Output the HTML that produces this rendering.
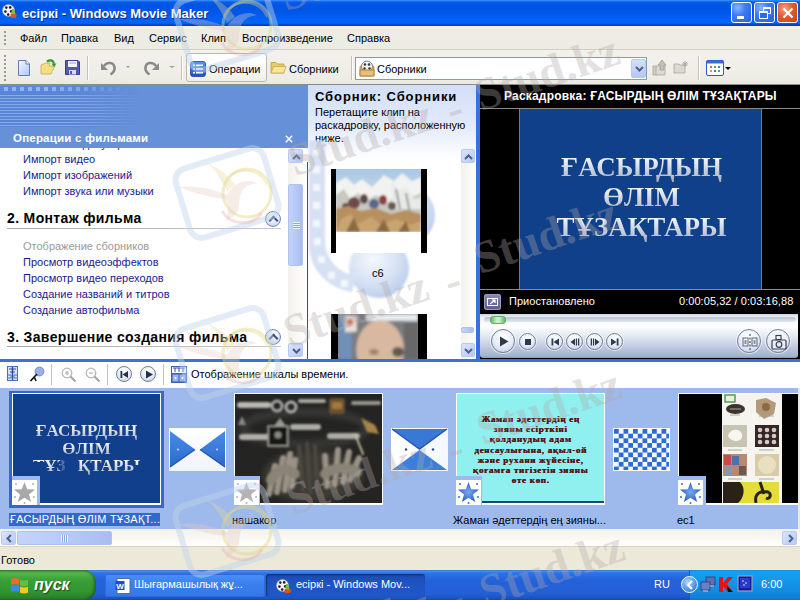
<!DOCTYPE html>
<html><head><meta charset="utf-8">
<style>
*{margin:0;padding:0;box-sizing:border-box}
html,body{width:800px;height:600px;overflow:hidden;background:#fff}
body{position:relative;font-family:"Liberation Sans",sans-serif;font-size:11px;color:#000}
.a{position:absolute}
.t{position:absolute;white-space:nowrap;line-height:1}
.grip{width:2px;background:repeating-linear-gradient(#9A9A90 0,#9A9A90 2px,transparent 2px,transparent 4px)}
.sep{width:2px;background:#C5C2B5;border-right:1px solid #FFF}
.lk{color:#1A1A90}
.hd{font-size:14px;font-weight:bold;letter-spacing:0.35px}
.cb{width:16px;height:16px;border-radius:50%;border:1px solid #7A8AA8;background:radial-gradient(circle at 50% 35%,#FFFFFF 0,#DCE4F4 60%,#B0C0E0 100%)}
.cb::after{content:"";position:absolute;left:4px;top:5px;width:5px;height:5px;border-left:2px solid #3A5080;border-top:2px solid #3A5080;transform:rotate(45deg)}
.sbtn{width:15px;height:14px;border:1px solid #B8CAF0;border-radius:2px;background:linear-gradient(135deg,#DCE6FC,#B6C9F5)}
.sthumb{position:absolute;border:1px solid #AFC2EC;border-radius:2px;background:linear-gradient(90deg,#C4D4FA,#B4C8F6 60%,#A8BCF0)}
.vt{font-family:"Liberation Serif",serif;font-weight:bold;font-size:27px;line-height:30px;letter-spacing:0px;background:linear-gradient(#EEF2F8 25%,#A4AEC2 100%);-webkit-background-clip:text;background-clip:text;color:transparent}
.pb{position:absolute;border-radius:50%;border:1.5px solid #76808F;background:radial-gradient(circle at 50% 30%,#FFFFFF 0,#E8EEF8 50%,#C0CCE4 100%);box-shadow:0 0 0 1px rgba(255,255,255,.6)}
.vt2{font-family:"Liberation Serif",serif;font-weight:bold;font-size:17px;line-height:17.5px;background:linear-gradient(#EEF2F8 25%,#A8B2C4 100%);-webkit-background-clip:text;background-clip:text;color:transparent}
.star{position:absolute}
.wmt{position:absolute;white-space:nowrap;font-family:"Liberation Serif",serif;font-weight:bold;font-size:46px;line-height:48px;color:rgba(178,168,168,0.36);transform-origin:0 100%;transform:rotate(-19deg)}
.wb{width:21px;height:21px;border:1px solid #fff;border-radius:3px;background:radial-gradient(circle at 30% 25%,#8CB4FF 0,#3C7CF2 40%,#2560E0 100%)}
</style></head><body>

<!-- TITLE BAR -->
<div class="a" id="title" style="left:0;top:0;width:800px;height:26px;background:linear-gradient(#3D95FF 0px,#0A5CE8 2px,#0054E3 6px,#0056E8 12px,#005FF5 18px,#0066F8 23px,#0042C8 25px,#0038B0 26px)">
 <svg class="a" style="left:2px;top:3px" width="16" height="16" viewBox="0 0 16 16">
  <circle cx="6.5" cy="7.5" r="6" fill="#F4F4F4" stroke="#9AA" stroke-width="0.6"/>
  <circle cx="4.3" cy="4.6" r="1.3" fill="#222"/><circle cx="8.2" cy="4.4" r="1.3" fill="#222"/>
  <circle cx="3.4" cy="8.6" r="1.3" fill="#222"/><circle cx="9.2" cy="8.4" r="1.3" fill="#222"/>
  <circle cx="6.2" cy="11.6" r="1.3" fill="#222"/>
  <path d="M10 6 L12 6 L14 13 L9 13 Z" fill="#7EC03A"/>
  <path d="M8.5 11 L15 11.5 L14 15 L9 15 Z" fill="#E2501E"/>
 </svg>
 <span class="t" style="left:22px;top:7px;font-size:13px;font-weight:bold;color:#fff;text-shadow:1px 1px 0 #0A2A8A">ecipкі - Windows Movie Maker</span>
 <div class="a wb" style="left:731px;top:2px"><div class="a" style="left:5px;top:13px;width:7px;height:3px;background:#fff"></div></div>
 <div class="a wb" style="left:754px;top:2px"><div class="a" style="left:8px;top:4px;width:8px;height:7px;border:1px solid #fff;border-top-width:2px"></div><div class="a" style="left:4px;top:8px;width:9px;height:8px;border:1px solid #fff;border-top-width:2px;background:#2D6BEA"></div></div>
 <div class="a wb" style="left:777px;top:2px;background:radial-gradient(circle at 35% 30%,#F2A58A 0,#E35A2C 45%,#C8401A 100%)"><svg class="a" style="left:4px;top:4px" width="12" height="12"><path d="M1.5 1.5L10.5 10.5M10.5 1.5L1.5 10.5" stroke="#fff" stroke-width="2.2"/></svg></div>
</div>

<!-- MENU BAR -->
<div class="a" id="menu" style="left:0;top:26px;width:800px;height:24px;background:linear-gradient(#F6F5EF 0,#EEEDE5 4px,#EDECE3 22px);border-bottom:1px solid #D2CFC2">
 <div class="a grip" style="left:4px;top:5px;height:14px"></div>
 <span class="t" style="left:20px;top:7px">Файл</span>
 <span class="t" style="left:61px;top:7px">Правка</span>
 <span class="t" style="left:114px;top:7px">Вид</span>
 <span class="t" style="left:149px;top:7px">Сервис</span>
 <span class="t" style="left:201px;top:7px">Клип</span>
 <span class="t" style="left:242px;top:7px">Воспроизведение</span>
 <span class="t" style="left:347px;top:7px">Справка</span>
</div>

<!-- TOOLBAR -->
<div class="a" id="tb" style="left:0;top:50px;width:800px;height:34px;background:linear-gradient(#F2F1EC 0,#EFEEE8 20px,#EBEAE2 34px)">
 <div class="a grip" style="left:4px;top:5px;height:26px"></div>
 <svg class="a" style="left:17px;top:10px" width="14" height="16" viewBox="0 0 14 16"><defs><linearGradient id="gd" x1="0" y1="0" x2="1" y2="1"><stop offset="0" stop-color="#F4F8FE"/><stop offset="1" stop-color="#A8C8F0"/></linearGradient></defs><path d="M1.5 0.5H9L12.5 4V15.5H1.5Z" fill="url(#gd)" stroke="#6C78A8"/><path d="M9 0.5V4H12.5" fill="#fff" stroke="#6C78A8"/></svg>
 <svg class="a" style="left:39px;top:8px" width="18" height="18" viewBox="0 0 18 18"><path d="M2 7L7 5H11L10 8H16L12 16H2Z" fill="#F3DE86" stroke="#C8A848" stroke-width="0.8"/><path d="M8 3.5C11 1.5 14 2 15 5.5" fill="none" stroke="#2E9A2E" stroke-width="2.2"/><path d="M12.5 5.5H17.5L15 9Z" fill="#2E9A2E"/></svg>
 <svg class="a" style="left:65px;top:10px" width="15" height="15" viewBox="0 0 15 15"><path d="M0.5 0.5H13L14.5 2V14.5H0.5Z" fill="#5558B0" stroke="#3A3C88"/><rect x="3" y="1" width="9" height="6" fill="#F4F4F8"/><rect x="4" y="2.5" width="7" height="1" fill="#9AA0C8"/><rect x="4" y="10" width="7" height="4.5" fill="#D8DAEE"/><rect x="5" y="11" width="2" height="3" fill="#5558B0"/></svg>
 <div class="a sep" style="left:87px;top:6px;height:24px"></div>
 <svg class="a" style="left:100px;top:10px" width="17" height="16" viewBox="0 0 17 16"><path d="M4 6C7 1.5 14 2 14.5 7.5C15 11 12 13.5 10.5 14.5" fill="none" stroke="#8A8A8A" stroke-width="2.6"/><path d="M1 3V10H8Z" fill="#8A8A8A"/></svg>
 <div class="a" style="left:126px;top:16px;width:0;height:0;border-left:2px solid transparent;border-right:2px solid transparent;border-top:2px solid #A0A09A"></div>
 <svg class="a" style="left:143px;top:10px" width="17" height="16" viewBox="0 0 17 16"><path d="M13 6C10 1.5 3 2 2.5 7.5C2 11 5 13.5 6.5 14.5" fill="none" stroke="#8A8A8A" stroke-width="2.6"/><path d="M16 3V10H9Z" fill="#8A8A8A"/></svg>
 <div class="a" style="left:169px;top:16px;width:0;height:0;border-left:3px solid transparent;border-right:3px solid transparent;border-top:2px solid #A0A09A"></div>
 <div class="a sep" style="left:181px;top:6px;height:24px"></div>
 <div class="a" style="left:186px;top:3px;width:81px;height:29px;border:1px solid #BAB8AC;border-radius:3px;background:linear-gradient(#FFFFFF 0,#F8F8F4 60%,#EFEEE8 100%)"></div>
 <svg class="a" style="left:190px;top:11px" width="16" height="16" viewBox="0 0 16 16"><defs><linearGradient id="gb" x1="0" y1="0" x2="0" y2="1"><stop offset="0" stop-color="#5C9AF8"/><stop offset="1" stop-color="#1E4ACC"/></linearGradient></defs><rect x="0.5" y="0.5" width="15" height="15" rx="2.5" fill="url(#gb)" stroke="#2040A8" stroke-width="0.8"/><rect x="3" y="3.5" width="2" height="1.6" fill="#fff"/><rect x="6" y="3.5" width="7" height="1.6" fill="#fff"/><rect x="3" y="7.2" width="2" height="1.6" fill="#fff"/><rect x="6" y="7.2" width="7" height="1.6" fill="#fff"/><rect x="3" y="10.9" width="2" height="1.6" fill="#fff"/><rect x="6" y="10.9" width="7" height="1.6" fill="#fff"/></svg>
 <span class="t" style="left:209px;top:14px">Операции</span>
 <svg class="a" style="left:270px;top:10px" width="17" height="15" viewBox="0 0 17 15"><path d="M1 2.5H6L7.5 4H14V13H1Z" fill="#E8CC68" stroke="#C0A040" stroke-width="0.8"/><path d="M3.5 6.5H16L13.5 13H1Z" fill="#F8E898" stroke="#C8A848" stroke-width="0.8"/></svg>
 <span class="t" style="left:289px;top:14px">Сборники</span>
 <div class="a sep" style="left:351px;top:6px;height:24px"></div>
 <div class="a" style="left:355px;top:7px;width:292px;height:23px;border:1px solid #7F9DB9;background:#fff">
  <svg class="a" style="left:3px;top:2px" width="17" height="17" viewBox="0 0 17 17"><rect x="1" y="6" width="14" height="10" rx="1" fill="#E8C070" stroke="#A07830" stroke-width="0.8"/><circle cx="8" cy="6.5" r="5.5" fill="#F0F0EE" stroke="#666" stroke-width="0.8"/><circle cx="6" cy="4.5" r="1.2" fill="#333"/><circle cx="10" cy="4.5" r="1.2" fill="#333"/><circle cx="5.5" cy="8.5" r="1.2" fill="#333"/><circle cx="10.5" cy="8.5" r="1.2" fill="#333"/><rect x="1" y="10" width="14" height="6" fill="#E8C070" stroke="#A07830" stroke-width="0.8"/></svg>
  <span class="t" style="left:21px;top:6px">Сборники</span>
  <div class="a" style="left:275px;top:1px;width:15px;height:19px;border:1px solid #B8CAF0;border-radius:2px;background:linear-gradient(#D4E0FC,#B4C8F4)"><svg class="a" style="left:3px;top:6px" width="9" height="6"><path d="M1 1L4.5 4.5L8 1" fill="none" stroke="#4D6185" stroke-width="2"/></svg></div>
 </div>
 <svg class="a" style="left:652px;top:9px" width="16" height="17" viewBox="0 0 16 17"><path d="M1 7H5V16H1Z" fill="#D0CEC4" stroke="#AAA8A0" stroke-width="0.8"/><path d="M4 8L8 6H13V16H4Z" fill="#DCDAD0" stroke="#AAA8A0" stroke-width="0.8"/><path d="M10 1L14 6H12V11H8V6H6Z" fill="#C4C2B8" stroke="#9E9C94" stroke-width="0.8"/></svg>
 <svg class="a" style="left:673px;top:10px" width="18" height="14" viewBox="0 0 18 14"><path d="M1 4H6L7 5H12V13H1Z" fill="#DCDAD0" stroke="#AAA8A0" stroke-width="0.8"/><path d="M12 1V7M9 4H15M10 2L14 6M14 2L10 6" stroke="#AAA8A0" stroke-width="1"/></svg>
 <div class="a sep" style="left:698px;top:6px;height:24px"></div>
 <svg class="a" style="left:706px;top:10px" width="18" height="16" viewBox="0 0 18 16"><rect x="0.5" y="0.5" width="17" height="15" rx="1.5" fill="#fff" stroke="#2A5AC8"/><rect x="0.5" y="0.5" width="17" height="3" fill="#3A6AD8"/><rect x="4" y="6" width="2" height="2" fill="#E06060"/><rect x="8" y="6" width="2" height="2" fill="#60A060"/><rect x="12" y="6" width="2" height="2" fill="#6070D0"/><rect x="4" y="10" width="2" height="2" fill="#D0A040"/><rect x="8" y="10" width="2" height="2" fill="#6060C0"/><rect x="12" y="10" width="2" height="2" fill="#50A0A0"/></svg>
 <div class="a" style="left:725px;top:17px;width:0;height:0;border-left:3px solid transparent;border-right:3px solid transparent;border-top:3px solid #000"></div>
</div>

<!-- MAIN BLUE -->
<div class="a" id="main" style="left:0;top:84px;width:800px;height:278px;background:#6690D8;border-top:1px solid #8A8A86">
 <div class="a" style="left:0;top:1px;width:140px;height:7px;background:#5A86D8;-webkit-mask-image:linear-gradient(90deg,#000 50%,transparent 100%)"></div>
 <div class="a" style="left:0;top:2px;width:130px;height:4px;background:repeating-linear-gradient(90deg,#5A88DD 0,#5A88DD 4px,#93B4F0 4px,#93B4F0 8px);-webkit-mask-image:linear-gradient(90deg,#000 40%,transparent 100%)"></div>
 <div class="a" style="left:0;top:8px;width:308px;height:34px;background:#6690D8"></div>
 <div class="a" style="left:0;top:8px;width:140px;height:34px;background:repeating-linear-gradient(#5A84D4 0,#5A84D4 2px,#86AAEC 2px,#86AAEC 3px);-webkit-mask-image:linear-gradient(90deg,#000 50%,transparent 100%)"></div>
 <div class="a" style="left:0;top:42px;width:308px;height:22px;background:#6690D8"></div>
 <span class="t" style="left:13px;top:48px;font-size:11.5px;font-weight:bold;color:#fff;letter-spacing:0.2px">Операции с фильмами</span>
 <svg class="a" style="left:285px;top:50px" width="8" height="8"><path d="M0.8 0.8L7.2 7.2M7.2 0.8L0.8 7.2" stroke="#fff" stroke-width="1.5"/></svg>
</div>

<!-- TASKS LIST -->
<div class="a" id="tasks" style="left:0;top:148px;width:308px;height:211px;background:#fff;overflow:hidden">
 <span class="t lk" style="left:23px;top:-9px">Запись с видеоустройства</span>
 <span class="t lk" style="left:23px;top:6px">Импорт видео</span>
 <span class="t lk" style="left:23px;top:22px">Импорт изображений</span>
 <span class="t lk" style="left:23px;top:38px">Импорт звука или музыки</span>
 <span class="t hd" style="left:7px;top:63px">2. Монтаж фильма</span>
 <div class="a" style="left:7px;top:80px;width:274px;height:1px;background:linear-gradient(90deg,#A8A8A8,#C8C8C8)"></div>
 <div class="a cb" style="left:265px;top:63px"></div>
 <span class="t lk" style="left:23px;top:93px;color:#9A9A9A">Отображение сборников</span>
 <span class="t lk" style="left:23px;top:109px">Просмотр видеоэффектов</span>
 <span class="t lk" style="left:23px;top:125px">Просмотр видео переходов</span>
 <span class="t lk" style="left:23px;top:141px">Создание названий и титров</span>
 <span class="t lk" style="left:23px;top:157px">Создание автофильма</span>
 <span class="t hd" style="left:7px;top:182px">3. Завершение создания фильма</span>
 <div class="a" style="left:7px;top:198px;width:274px;height:1px;background:linear-gradient(90deg,#A8A8A8,#C8C8C8)"></div>
 <div class="a cb" style="left:265px;top:181px"></div>
 <!-- scrollbar -->
 <div class="a" style="left:288px;top:0;width:17px;height:211px;background:linear-gradient(90deg,#F3F1EC,#FEFEFB)"></div>
 <div class="a sbtn" style="left:288px;top:1px"><svg class="a" style="left:3px;top:4px" width="9" height="6"><path d="M1 5L4.5 1.5L8 5" fill="none" stroke="#4D6185" stroke-width="2"/></svg></div>
 <div class="a sthumb" style="left:288px;top:36px;width:15px;height:82px"><div class="a" style="left:4px;top:37px;width:7px;height:7px;background:repeating-linear-gradient(#EEF4FE 0,#EEF4FE 1px,#8CA8E0 1px,#8CA8E0 2px)"></div></div>
 <div class="a sbtn" style="left:288px;top:195px"><svg class="a" style="left:3px;top:4px" width="9" height="6"><path d="M1 1L4.5 4.5L8 1" fill="none" stroke="#4D6185" stroke-width="2"/></svg></div>
 <div class="a" style="left:307px;top:14px;width:1px;height:197px;background:#3A4E8E"></div>
</div>

<!-- COLLECTION PANE -->
<div class="a" id="coll" style="left:308px;top:85px;width:168px;height:274px;background:linear-gradient(#D2DFF7 0,#E2EAF9 40px,#F4F7FD 62px,#fff 75px);overflow:hidden">
 <span class="t" style="left:7px;top:5px;font-size:13px;font-weight:bold;letter-spacing:0.9px">Сборник: Сборники</span>
 <span class="t" style="left:7px;top:22px">Перетащите клип на</span>
 <span class="t" style="left:7px;top:35px">раскадровку, расположенную</span>
 <span class="t" style="left:7px;top:48px">ниже.</span>
 <div class="a" style="left:153px;top:64px;width:15px;height:210px;background:linear-gradient(90deg,#F3F1EC,#FEFEFB)"></div>
 <div class="a sbtn" style="left:153px;top:64px;width:14px"><svg class="a" style="left:2px;top:4px" width="9" height="6"><path d="M1 5L4.5 1.5L8 5" fill="none" stroke="#4D6185" stroke-width="2"/></svg></div>
 <div class="a sthumb" style="left:153px;top:242px;width:13px;height:6px"></div>
 <div class="a sbtn" style="left:153px;top:258px;width:14px"><svg class="a" style="left:2px;top:4px" width="9" height="6"><path d="M1 1L4.5 4.5L8 1" fill="none" stroke="#4D6185" stroke-width="2"/></svg></div>
 <svg class="a" style="left:0;top:55px" width="153" height="219" viewBox="0 0 153 219"><defs><radialGradient id="sph" cx="0.4" cy="0.35" r="0.65"><stop offset="0" stop-color="#F4F8FE"/><stop offset="0.6" stop-color="#D4E0F4"/><stop offset="1" stop-color="#B8CCEC"/></radialGradient><filter id="bl5"><feGaussianBlur stdDeviation="1.2"/></filter></defs>
  <g filter="url(#bl5)" opacity="0.9">
  <circle cx="97" cy="75" r="30" fill="url(#sph)"/>
  <circle cx="71" cy="128" r="30" fill="url(#sph)"/>
  <path d="M1 0H17V100C17 118 28 132 48 136L44 152C18 148 1 128 1 104Z" fill="#D2DEF2"/>
  <path d="M5 8h7v7h-7zM5 26h7v7h-7zM5 44h7v7h-7zM5 62h7v7h-7zM5 80h7v7h-7zM6 98h7v7h-7zM10 116h7v7h-7zM20 132h7v7h-7zM33 140h7v7h-7z" fill="#F2F6FC"/>
  </g></svg>
 <!-- thumb 1 -->
 <div class="a" style="left:23px;top:84px;width:96px;height:84px;background:#000"></div>
 <div class="a" style="left:28px;top:84px;width:85px;height:84px;background:#fff"></div>
 <svg class="a" style="left:28px;top:84px" width="85" height="63" viewBox="0 0 85 63"><defs><linearGradient id="sky" x1="0" y1="0" x2="0" y2="1"><stop offset="0" stop-color="#A8C8E4"/><stop offset="1" stop-color="#E8EEF2"/></linearGradient><filter id="bl1"><feGaussianBlur stdDeviation="1.1"/></filter></defs>
  <rect width="85" height="63" fill="url(#sky)"/>
  <g filter="url(#bl1)">
  <path d="M0 14L10 8L18 16L26 10L36 18L48 6L58 12L66 4L76 12L85 8V45H0Z" fill="#F2F2F0"/>
  <path d="M0 26L8 20L14 30L22 24L30 32L40 26L52 34L62 22L72 30L85 24V48H0Z" fill="#C8C8C0"/>
  <path d="M56 10L62 22L70 18L78 30L85 28V40H56Z" fill="#E8EAEA"/>
  <path d="M60 20L64 40M70 24L74 44" stroke="#9A9A90" stroke-width="2"/>
  <ellipse cx="18" cy="34" rx="6" ry="6" fill="#704848"/><ellipse cx="28" cy="30" rx="4" ry="5" fill="#5A4A48"/><ellipse cx="38" cy="35" rx="5" ry="5" fill="#58688A"/><ellipse cx="47" cy="31" rx="4" ry="5" fill="#8A4040"/><ellipse cx="56" cy="37" rx="4" ry="4" fill="#6A5A50"/><ellipse cx="10" cy="38" rx="4" ry="4" fill="#5A5048"/>
  <path d="M0 40L12 37L25 42L40 39L55 45L70 41L85 45V63H0Z" fill="#B89060"/>
  <path d="M5 50L15 45L22 55L35 48L45 56L60 50L75 56L85 52V63H0Z" fill="#C8A470"/>
  <path d="M10 63L18 48L24 63M40 63L48 50L54 63M62 63L70 52L74 63" fill="#8A6A44"/>
  </g></svg>
 <span class="t" style="left:64px;top:183px">c6</span>
 <!-- thumb 2 -->
 <div class="a" style="left:23px;top:229px;width:96px;height:50px;background:#000"></div>
 <svg class="a" style="left:30px;top:229px" width="80" height="45" viewBox="0 0 80 45"><defs><filter id="bl2"><feGaussianBlur stdDeviation="1.5"/></filter></defs>
  <rect width="80" height="45" fill="#7A7A80"/>
  <g filter="url(#bl2)">
  <rect x="0" y="0" width="14" height="45" fill="#7090B8"/>
  <rect x="28" y="0" width="52" height="7" fill="#E8ECF0"/>
  <rect x="7" y="2" width="12" height="16" fill="#E8E0D8"/><circle cx="12" cy="8" r="3.5" fill="#D07050"/>
  <ellipse cx="42" cy="36" rx="24" ry="30" fill="#D8B8A0"/>
  <ellipse cx="60" cy="38" rx="6" ry="5" fill="#605850"/>
  <ellipse cx="36" cy="38" rx="5" ry="3" fill="#A08070"/>
  <rect x="66" y="8" width="14" height="37" fill="#686868"/>
  </g></svg>
</div>
<div class="a" style="left:476px;top:85px;width:4px;height:274px;background:#3A6FE0"></div>

<!-- PREVIEW -->
<div class="a" id="prev" style="left:480px;top:85px;width:320px;height:274px;background:#000;overflow:hidden">
 <span class="t" style="left:24px;top:5px;font-size:12px;font-weight:bold;color:#fff;letter-spacing:0.2px">Раскадровка: ҒАСЫРДЫҢ ӨЛІМ ТҰЗАҚТАРЫ</span>
 <div class="a" style="left:0;top:23px;width:320px;height:1px;background:#8C8C8C"></div>
 <div class="a" style="left:39px;top:24px;width:243px;height:181px;background:#10408A;border-left:1px solid #7A7A7A;border-right:1px solid #7A7A7A"></div>
 <div class="a" style="left:0;top:204px;width:320px;height:1px;background:#8C8C8C"></div>
 <div class="a" style="left:40px;top:67px;width:243px;text-align:center">
  <div class="vt" style="height:30px">ҒАСЫРДЫҢ</div>
  <div class="vt" style="height:30px">ӨЛІМ</div>
  <div class="vt" style="height:30px">ТҰЗАҚТАРЫ</div>
 </div>
 <div class="a" style="left:4px;top:209px;width:17px;height:16px;border-radius:3px;background:linear-gradient(#8A8AB8,#5A5A8C);box-shadow:inset 0 0 0 1px #9A9AC0"><div class="a" style="left:3px;top:4px;width:11px;height:8px;border:1px solid #fff"></div><svg class="a" style="left:5px;top:5px" width="7" height="6"><path d="M1 5L6 1M3 1H6V4" fill="none" stroke="#fff" stroke-width="1.2"/></svg></div>
 <span class="t" style="left:29px;top:211px;font-size:11px;color:#fff;letter-spacing:0.05px">Приостановлено</span>
 <span class="t" style="left:199px;top:211px;font-size:11px;color:#fff;letter-spacing:0.05px">0:00:05,32 / 0:03:16,88</span>
 <div class="a" style="left:0;top:229px;width:318px;height:44px;border-radius:0 0 3px 3px;background:linear-gradient(#C8D0E0 0,#EEF0F6 3px,#FFFFFF 12px,#E4E8F2 22px,#BCC6DE 34px,#A4B2D4 42px,#8A98C0 44px)"></div>
 <div class="a" style="left:4px;top:232px;width:312px;height:5px;border-radius:3px;background:linear-gradient(#B8C0D4,#E4E8F0)"></div>
 <div class="a" style="left:10px;top:231px;width:16px;height:8px;border-radius:3px;background:linear-gradient(90deg,#5CB85C,#C8F0C8 40%,#C8F0C8 60%,#5CB85C);border:1px solid #6AAA6A"></div>
 <div class="a pb" style="left:11px;top:244px;width:24px;height:24px"><svg class="a" style="left:7px;top:6px" width="10" height="11"><path d="M1 0.5L9.5 5.5L1 10.5Z" fill="#2E3A4E"/></svg></div>
 <div class="a pb" style="left:39px;top:248px;width:17px;height:17px"><div class="a" style="left:5px;top:5px;width:6px;height:6px;background:#2E3A4E"></div></div>
 <div class="a pb" style="left:66px;top:248px;width:17px;height:17px"><svg class="a" style="left:3px;top:3px" width="10" height="10"><rect x="1.5" y="1.5" width="1.8" height="7" fill="#2E3A4E"/><path d="M9 1.5V8.5L3.5 5Z" fill="#2E3A4E"/></svg></div>
 <div class="a pb" style="left:86px;top:248px;width:17px;height:17px"><svg class="a" style="left:3px;top:3px" width="10" height="10"><path d="M5 1.5V8.5L0.5 5Z" fill="#2E3A4E"/><rect x="5.8" y="1.5" width="1.3" height="7" fill="#2E3A4E"/><rect x="8" y="1.5" width="1.3" height="7" fill="#2E3A4E"/></svg></div>
 <div class="a pb" style="left:106px;top:248px;width:17px;height:17px"><svg class="a" style="left:3px;top:3px" width="10" height="10"><rect x="0.7" y="1.5" width="1.3" height="7" fill="#2E3A4E"/><rect x="2.9" y="1.5" width="1.3" height="7" fill="#2E3A4E"/><path d="M5 1.5V8.5L9.5 5Z" fill="#2E3A4E"/></svg></div>
 <div class="a pb" style="left:126px;top:248px;width:17px;height:17px"><svg class="a" style="left:3px;top:3px" width="10" height="10"><path d="M1 1.5V8.5L6.5 5Z" fill="#2E3A4E"/><rect x="6.7" y="1.5" width="1.8" height="7" fill="#2E3A4E"/></svg></div>
 <div class="a pb" style="left:257px;top:244px;width:24px;height:24px"><svg class="a" style="left:4px;top:4px" width="16" height="16"><rect x="1" y="4" width="5" height="8" fill="none" stroke="#606878" stroke-width="1"/><rect x="10" y="4" width="5" height="8" fill="none" stroke="#606878" stroke-width="1"/><path d="M8 0V16" stroke="#606878" stroke-width="1.4" stroke-dasharray="2 1.5"/><rect x="2.5" y="6" width="2" height="4" fill="#8890A0"/><rect x="11.5" y="6" width="2" height="4" fill="#8890A0"/></svg></div>
 <div class="a pb" style="left:286px;top:244px;width:24px;height:24px"><svg class="a" style="left:4px;top:4px" width="16" height="16"><rect x="1" y="6" width="14" height="9" rx="1" fill="#E8ECF4" stroke="#3A4050" stroke-width="1.2"/><rect x="5" y="1.5" width="5" height="4" fill="none" stroke="#3A4050" stroke-width="1.2"/><circle cx="8" cy="10.5" r="2.8" fill="none" stroke="#3A4050" stroke-width="1.2"/></svg></div>
</div>

<div class="a" style="left:0;top:359px;width:800px;height:3px;background:#4070D4"></div>
<!-- STORYBOARD TOOLBAR -->
<div class="a" id="sbt" style="left:0;top:362px;width:800px;height:26px;background:#fff">
 <svg class="a" style="left:7px;top:4px" width="11" height="15" viewBox="0 0 11 15"><rect x="0.5" y="0.5" width="10" height="14" fill="#D8E4FA" stroke="#4A6EC0"/><path d="M5.5 1V14" stroke="#2A4A9A" stroke-width="1.4"/><path d="M2 3H9M3 6H8" stroke="#2A4A9A" stroke-width="1"/><path d="M1 9H4V12H1M10 9H7V12H10" fill="none" stroke="#4A6EC0"/></svg>
 <svg class="a" style="left:29px;top:4px" width="16" height="16" viewBox="0 0 16 16"><circle cx="10.5" cy="5.5" r="4.5" fill="#9AAEE8" stroke="#6A7EC8" stroke-width="0.8"/><path d="M8 8L1.5 15" stroke="#111" stroke-width="1.8"/><path d="M5.5 11.5L7 15" stroke="#111" stroke-width="1.6"/></svg>
 <div class="a sep" style="left:51px;top:2px;height:21px"></div>
 <svg class="a" style="left:61px;top:5px" width="16" height="15" viewBox="0 0 16 15"><circle cx="6" cy="6" r="4.8" fill="none" stroke="#B8B8B8" stroke-width="1.3"/><path d="M4 6H8M6 4V8" stroke="#A8A8A8" stroke-width="1.1"/><path d="M9.5 9.5L14.5 14.5" stroke="#A8A8A8" stroke-width="2.2"/></svg>
 <svg class="a" style="left:85px;top:5px" width="16" height="15" viewBox="0 0 16 15"><circle cx="6" cy="6" r="4.8" fill="none" stroke="#B8B8B8" stroke-width="1.3"/><path d="M4 6H8" stroke="#A8A8A8" stroke-width="1.1"/><path d="M9.5 9.5L14.5 14.5" stroke="#A8A8A8" stroke-width="2.2"/></svg>
 <div class="a sep" style="left:107px;top:2px;height:21px"></div>
 <div class="a pb" style="left:116px;top:4px;width:16px;height:16px"><svg class="a" style="left:3px;top:3px" width="9" height="9"><rect x="0.5" y="1" width="1.8" height="7" fill="#233048"/><path d="M8 1V8L2.5 4.5Z" fill="#233048"/></svg></div>
 <div class="a pb" style="left:140px;top:4px;width:16px;height:16px"><svg class="a" style="left:4px;top:3px" width="9" height="9"><path d="M1 0.5L8 4.5L1 8.5Z" fill="#233048"/></svg></div>
 <div class="a sep" style="left:163px;top:2px;height:21px"></div>
 <svg class="a" style="left:171px;top:4px" width="16" height="17" viewBox="0 0 16 17"><rect x="0" y="0" width="16" height="17" fill="#3C5EB8"/><rect x="1" y="1" width="14" height="6" fill="#fff"/><path d="M2 2H14M4 2V6M8 2V6M12 2V6" stroke="#3050A8" stroke-width="1"/><rect x="1.5" y="8.5" width="6" height="7" fill="#9AB4EE"/><rect x="8.5" y="8.5" width="6" height="7" fill="#9AB4EE"/><circle cx="4.5" cy="12" r="1" fill="#fff"/><circle cx="11.5" cy="12" r="1" fill="#fff"/></svg>
 <span class="t" style="left:191px;top:7px">Отображение шкалы времени.</span>
</div>

<!-- STORYBOARD -->
<div class="a" id="sb" style="left:0;top:388px;width:798px;height:141px;background:#9EBAEC;overflow:hidden">
 <!-- clip1 selected -->
 <div class="a" style="left:9px;top:3px;width:155px;height:117px;background:#3468CC"></div>
 <div class="a" style="left:12px;top:5px;width:149px;height:112px;background:#fff"></div>
 <div class="a" style="left:13px;top:6px;width:147px;height:109px;background:#123F8C"></div>
 <div class="a" style="left:13px;top:34px;width:147px;text-align:center">
  <div class="vt2">ҒАСЫРДЫҢ</div>
  <div class="vt2">ӨЛІМ</div>
  <div class="vt2">ТҰЗАҚТАРЫ</div>
 </div>
 <div class="a" style="left:32px;top:74px;width:12px;height:12px;background:#123F8C"></div>
 <div class="a" style="left:60px;top:72px;width:5px;height:13px;background:rgba(18,63,140,.7)"></div>
 <div class="a" style="left:65px;top:71px;width:13px;height:15px;background:#123F8C"></div>
 <div class="a" style="left:134px;top:77px;width:6px;height:8px;background:#123F8C"></div>
 <div class="a" style="left:12px;top:88px;width:28px;height:29px;background:#9EBAEC"></div>
 <div class="a star" style="left:12px;top:92px;width:25px;height:25px;background:#fff"><svg width="25" height="25" viewBox="0 0 25 25"><path d="M12.5 2L15.2 9.2L23 9.5L17 14.4L19.2 22L12.5 17.8L5.8 22L8 14.4L2 9.5L9.8 9.2Z" fill="#A8A8A8"/><circle cx="4" cy="4" r="1" fill="#B0B0C0"/><circle cx="21" cy="4" r="1" fill="#B0B0C0"/><circle cx="3" cy="17" r="1" fill="#B0B0C0"/><circle cx="22" cy="17" r="1" fill="#B0B0C0"/><circle cx="12.5" cy="23" r="1" fill="#B0B0C0"/></svg></div>
 <div class="a" style="left:9px;top:125px;width:151px;height:13px;background:#3468CC"></div>
 <span class="t" style="left:10px;top:126px;color:#fff;letter-spacing:0.25px">ҒАСЫРДЫҢ ӨЛІМ ТҰЗАҚТ...</span>
 <!-- transition 1 -->
 <div class="a" style="left:169px;top:40px;width:57px;height:43px;background:linear-gradient(#FFFFFF,#F0F4FC)"><svg width="57" height="43"><defs><linearGradient id="tg1" x1="0" y1="0" x2="0" y2="1"><stop offset="0" stop-color="#4A88E4"/><stop offset="0.5" stop-color="#3A7CDC"/><stop offset="1" stop-color="#2E66C4"/></linearGradient></defs><path d="M1 3L26 21.5L1 39Z" fill="url(#tg1)"/><path d="M56 3L31 21.5L56 39Z" fill="url(#tg1)"/><path d="M1 39L26 21.5M56 39L31 21.5" stroke="#2656AE" stroke-width="1.5"/><circle cx="9" cy="21.5" r="1" fill="#CFE0FA"/><circle cx="48" cy="21.5" r="1" fill="#CFE0FA"/></svg></div>
 <!-- clip2 -->
 <div class="a" style="left:234px;top:5px;width:149px;height:112px;background:#fff"></div>
 <svg class="a" id="c2" style="left:235px;top:6px" width="147" height="109" viewBox="0 0 147 109"><defs><filter id="b3"><feGaussianBlur stdDeviation="0.9"/></filter><filter id="b4"><feGaussianBlur stdDeviation="3"/></filter></defs>
  <rect width="147" height="109" fill="#242422"/>
  <g filter="url(#b4)"><ellipse cx="78" cy="82" rx="50" ry="26" fill="#3C3A34"/><ellipse cx="70" cy="34" rx="62" ry="16" fill="none" stroke="#4A4A48" stroke-width="4"/></g>
  <g filter="url(#b3)" stroke-linecap="round">
  <path d="M5 11H33" stroke="#B8B8B0" stroke-width="6"/>
  <circle cx="42" cy="12" r="5" fill="none" stroke="#A8A8A4" stroke-width="3"/><circle cx="56" cy="13" r="5" fill="none" stroke="#B0B0AC" stroke-width="3"/>
  <path d="M65 7H89" stroke="#A8A8A0" stroke-width="4"/>
  <rect x="94" y="4" width="16" height="16" rx="3" fill="#6A5030"/><rect x="97" y="8" width="10" height="7" fill="#A07838"/>
  <path d="M118 9H144" stroke="#989890" stroke-width="4"/>
  <path d="M3 31L7 22L11 31Z" fill="#8A8A84"/>
  <path d="M7 43H33" stroke="#B0B0A8" stroke-width="6"/>
  <path d="M39 32L45 24L51 32Z" fill="#9A9A94"/>
  <rect x="33" y="32" width="20" height="20" fill="#161616" stroke="#A8A8A0" stroke-width="1.5"/><circle cx="43" cy="41" r="3.5" fill="#88887E"/>
  <path d="M58 33H83" stroke="#ACACA4" stroke-width="6"/>
  <path d="M95 42H122" stroke="#ACACA4" stroke-width="6"/>
  <path d="M126 24L140 31L144 40L132 38Z" fill="#A88448"/>
  <path d="M120 40L128 60" stroke="#C8C0A0" stroke-width="2"/>
  <path d="M34 100L40 72M42 98L48 64M50 96L55 60M57 92L60 66" stroke="#9A9284" stroke-width="6"/>
  <path d="M36 86C40 76 50 72 60 80" stroke="#8A8476" stroke-width="10" fill="none"/>
  <path d="M92 92L90 62M100 90L103 56M108 88L114 58M115 86L124 64" stroke="#9A9284" stroke-width="6"/>
  <path d="M90 80C96 74 110 72 122 78" stroke="#8A8476" stroke-width="10" fill="none"/>
  <path d="M64 52L68 96M72 50L75 98M80 52L82 96" stroke="#4A4640" stroke-width="4"/>
  </g></svg>
 <div class="a" style="left:234px;top:88px;width:26px;height:29px;background:#9EBAEC"></div>
 <div class="a star" style="left:234px;top:92px;width:25px;height:25px;background:#fff"><svg width="25" height="25" viewBox="0 0 25 25"><path d="M12.5 2L15.2 9.2L23 9.5L17 14.4L19.2 22L12.5 17.8L5.8 22L8 14.4L2 9.5L9.8 9.2Z" fill="#B4B4B4"/><circle cx="4" cy="4" r="1" fill="#B0B0C0"/><circle cx="21" cy="4" r="1" fill="#B0B0C0"/><circle cx="3" cy="17" r="1" fill="#B0B0C0"/><circle cx="22" cy="17" r="1" fill="#B0B0C0"/><circle cx="12.5" cy="23" r="1" fill="#B0B0C0"/></svg></div>
 <span class="t" style="left:232px;top:127px">нашакор</span>
 <!-- transition 2 -->
 <div class="a" style="left:391px;top:40px;width:57px;height:43px;background:linear-gradient(90deg,#FFFFFF,#F4F8FE)"><svg width="57" height="43"><path d="M1 1H56L28.5 21Z" fill="#3A78D8"/><path d="M1 42H56L28.5 22Z" fill="#3C7EDC"/><path d="M1 1L28.5 21L56 1" fill="none" stroke="#2656AE" stroke-width="1.5"/><circle cx="15" cy="21.5" r="1.2" fill="#2A4A8A"/><circle cx="42" cy="21.5" r="1.2" fill="#2A4A8A"/></svg></div>
 <!-- clip3 -->
 <div class="a" style="left:456px;top:5px;width:149px;height:112px;background:#fff"></div>
 <div class="a" style="left:457px;top:6px;width:147px;height:109px;background:#90F0F0;border-bottom:2px solid #28407A"></div>
 <div class="a" style="left:457px;top:26px;width:147px;text-align:center;font-family:'Liberation Serif',serif;font-weight:bold;font-size:9px;line-height:10.2px;color:#5A1414;letter-spacing:0.7px;text-shadow:0.5px 0 0 #5A1414">Жаман әдеттердің ең<br>зияны есірткіні<br>қолданудың адам<br>денсаулығына, ақыл-ой<br>және рухани жүйесіне,<br>қоғамға тигізетін зияны<br>өте көп.</div>
 <div class="a" style="left:456px;top:88px;width:26px;height:29px;background:#9EBAEC"></div>
 <div class="a star" style="left:456px;top:92px;width:25px;height:25px;background:#fff"><svg width="25" height="25" viewBox="0 0 25 25"><defs><radialGradient id="sg"><stop offset="0" stop-color="#7AA8EE"/><stop offset="1" stop-color="#2A62C8"/></radialGradient></defs><path d="M12.5 2L15.2 9.2L23 9.5L17 14.4L19.2 22L12.5 17.8L5.8 22L8 14.4L2 9.5L9.8 9.2Z" fill="url(#sg)"/><circle cx="4" cy="4" r="1" fill="#3A6AC8"/><circle cx="21" cy="4" r="1" fill="#3A6AC8"/><circle cx="3" cy="17" r="1" fill="#3A6AC8"/><circle cx="22" cy="17" r="1" fill="#3A6AC8"/><circle cx="12.5" cy="23" r="1" fill="#3A6AC8"/></svg></div>
 <span class="t" style="left:453px;top:127px">Жаман әдеттердің ең зияны...</span>
 <!-- transition 3 -->
 <svg class="a" style="left:613px;top:40px" width="57" height="43" viewBox="0 0 57 43"><defs><pattern id="chk" x="1" y="1" width="9.5" height="9.4" patternUnits="userSpaceOnUse"><rect width="9.5" height="9.4" fill="#F4F8FF"/><rect x="0" y="0" width="4.75" height="4.7" fill="#2E6AD0"/><rect x="4.75" y="4.7" width="4.75" height="4.7" fill="#2E6AD0"/></pattern></defs><rect width="57" height="43" fill="#fff"/><rect x="1" y="1" width="55" height="41" fill="url(#chk)"/></svg>
 <!-- clip4 -->
 <div class="a" style="left:678px;top:5px;width:122px;height:112px;background:#fff"></div>
 <div class="a" style="left:679px;top:6px;width:121px;height:109px;background:#000"></div>
 <svg class="a" style="left:722px;top:6px" width="60" height="109" viewBox="0 0 60 109"><defs><filter id="b6"><feGaussianBlur stdDeviation="0.7"/></filter></defs>
  <rect width="60" height="109" fill="#F6F4EE"/>
  <g filter="url(#b6)">
  <rect x="3" y="1" width="10" height="7" fill="#E8F0E0" stroke="#50A050" stroke-width="1.5"/>
  <ellipse cx="13.5" cy="15" rx="9.5" ry="5" fill="#3A3430"/><path d="M8 15H19" stroke="#8A8070" stroke-width="1.5"/>
  <path d="M8 21H18M37 22H52" stroke="#A8A8A0" stroke-width="1"/>
  <path d="M34 6L44 4L54 9L52 20L42 25L34 18Z" fill="#B49A78"/><circle cx="44" cy="13" r="4" fill="#8A6A48"/>
  <rect x="1" y="31" width="24" height="22" fill="#C8C4B4"/><path d="M6 42C8 34 18 34 20 40C22 48 10 50 6 42Z" fill="#F8F6F0"/>
  <path d="M6 56H20M37 56H52" stroke="#A8A8A0" stroke-width="1"/>
  <rect x="33" y="31" width="24" height="22" fill="#302828"/>
  <g fill="#D8C8C0"><circle cx="38" cy="36" r="2.3"/><circle cx="45" cy="36" r="2.3"/><circle cx="52" cy="36" r="2.3"/><circle cx="38" cy="42" r="2.3"/><circle cx="45" cy="42" r="2.3"/><circle cx="52" cy="42" r="2.3"/><circle cx="38" cy="48" r="2.3"/><circle cx="45" cy="48" r="2.3"/><circle cx="52" cy="48" r="2.3"/></g>
  <rect x="1" y="60" width="24" height="22" fill="#B88870"/><rect x="2" y="61" width="7" height="10" fill="#C84848"/><rect x="10" y="62" width="7" height="9" fill="#5070A8"/><rect x="17" y="72" width="7" height="9" fill="#6A5A50"/><rect x="3" y="72" width="7" height="9" fill="#8098B0"/>
  <path d="M6 85H20M37 85H52" stroke="#A8A8A0" stroke-width="1"/>
  <rect x="33" y="60" width="24" height="22" fill="#D8CCA8"/><circle cx="45" cy="71" r="9" fill="#E8E0C0"/>
  <rect x="1" y="88" width="56" height="21" fill="#E4DC38"/>
  <path d="M1 88H18C24 94 22 104 16 109H1Z" fill="#2A2418"/>
  <path d="M34 109C32 100 38 96 46 98C50 100 48 106 44 104M38 88L42 100" fill="none" stroke="#2A2418" stroke-width="3"/>
  </g></svg>
 <div class="a" style="left:678px;top:88px;width:28px;height:29px;background:#9EBAEC"></div>
 <div class="a star" style="left:678px;top:92px;width:25px;height:25px;background:#fff"><svg width="25" height="25" viewBox="0 0 25 25"><path d="M12.5 2L15.2 9.2L23 9.5L17 14.4L19.2 22L12.5 17.8L5.8 22L8 14.4L2 9.5L9.8 9.2Z" fill="url(#sg)"/><circle cx="4" cy="4" r="1" fill="#3A6AC8"/><circle cx="21" cy="4" r="1" fill="#3A6AC8"/><circle cx="3" cy="17" r="1" fill="#3A6AC8"/><circle cx="22" cy="17" r="1" fill="#3A6AC8"/><circle cx="12.5" cy="23" r="1" fill="#3A6AC8"/></svg></div>
 <span class="t" style="left:677px;top:127px">ec1</span>
</div>
<div class="a" style="left:798px;top:388px;width:2px;height:141px;background:#E8E8E4"></div>

<!-- H SCROLL -->
<div class="a" id="hs" style="left:0;top:529px;width:800px;height:17px;background:linear-gradient(#F3F1EC,#FEFEFB)">
 <div class="a sbtn" style="left:1px;top:2px;width:15px;height:14px"><svg class="a" style="left:4px;top:2px" width="6" height="9"><path d="M5 1L1.5 4.5L5 8" fill="none" stroke="#4D6185" stroke-width="2"/></svg></div>
 <div class="a sthumb" style="left:17px;top:2px;width:95px;height:14px"><div class="a" style="left:43px;top:3px;width:7px;height:7px;background:repeating-linear-gradient(90deg,#EEF4FE 0,#EEF4FE 1px,#8CA8E0 1px,#8CA8E0 2px)"></div></div>
 <div class="a sbtn" style="left:782px;top:2px;width:15px;height:14px"><svg class="a" style="left:5px;top:2px" width="6" height="9"><path d="M1 1L4.5 4.5L1 8" fill="none" stroke="#4D6185" stroke-width="2"/></svg></div>
</div>

<!-- STATUS -->
<div class="a" id="status" style="left:0;top:546px;width:800px;height:24px;background:#ECE9D8;border-top:1px solid #D8D4C4">
 <span class="t" style="left:1px;top:8px">Готово</span>
</div>

<!-- TASKBAR -->
<div class="a" id="taskbar" style="left:0;top:570px;width:800px;height:30px;background:linear-gradient(#3168D5 0,#4993E6 1px,#2A74E8 3px,#2562DA 10px,#2360D6 24px,#1A50C0 29px,#1642A8 30px)">
 <div class="a" style="left:0;top:0;width:96px;height:30px;border-radius:0 12px 12px 0;background:linear-gradient(#3C8C3C 0,#52B84A 3px,#3AA038 10px,#309430 22px,#287A28 30px);box-shadow:inset -2px 0 3px rgba(0,0,0,.35)"></div>
 <svg class="a" style="left:10px;top:6px" width="19" height="18" viewBox="0 0 19 18"><path d="M1 3Q5 1 9 3V9Q5 7 1 9Z" fill="#F06A30"/><path d="M10 3.5Q14 5.5 18 3.5V9.5Q14 11.5 10 9.5Z" fill="#60C040"/><path d="M1 10Q5 8 9 10V16Q5 14 1 16Z" fill="#3A8AF0"/><path d="M10 10.5Q14 12.5 18 10.5V16.5Q14 18.5 10 16.5Z" fill="#F8C820"/></svg>
 <span class="t" style="left:34px;top:7px;font-size:16px;font-weight:bold;font-style:italic;color:#fff;text-shadow:1px 1px 1px #1A4A1A">пуск</span>
 <div class="a" style="left:105px;top:4px;width:160px;height:23px;border-radius:3px;background:linear-gradient(#4A90F8,#3C80F0 40%,#3478E8);box-shadow:inset 0 0 0 1px #2E6AD8"></div>
 <svg class="a" style="left:115px;top:8px" width="16" height="16" viewBox="0 0 16 16"><rect x="2" y="0.5" width="13" height="15" fill="#fff" stroke="#5A6A9A"/><rect x="0.5" y="3" width="9" height="9" fill="#2A4AB8"/><text x="1.2" y="10.5" font-size="8" font-family="Liberation Sans" font-weight="bold" fill="#fff">W</text></svg>
 <span class="t" style="left:134px;top:9px;color:#fff">Шығармашылық жұ...</span>
 <div class="a" style="left:266px;top:4px;width:159px;height:23px;border-radius:3px;background:linear-gradient(#1A48B0,#1E52C0 30%,#2058C8);box-shadow:inset 1px 1px 2px rgba(0,0,0,.4)"></div>
 <svg class="a" style="left:276px;top:8px" width="16" height="16" viewBox="0 0 16 16"><circle cx="6.5" cy="7.5" r="6" fill="#F4F4F4" stroke="#9AA" stroke-width="0.6"/><circle cx="4.3" cy="4.6" r="1.3" fill="#222"/><circle cx="8.2" cy="4.4" r="1.3" fill="#222"/><circle cx="3.4" cy="8.6" r="1.3" fill="#222"/><circle cx="9.2" cy="8.4" r="1.3" fill="#222"/><circle cx="6.2" cy="11.6" r="1.3" fill="#222"/><path d="M10 6 L12 6 L14 13 L9 13 Z" fill="#7EC03A"/><path d="M8.5 11 L15 11.5 L14 15 L9 15 Z" fill="#E2501E"/></svg>
 <span class="t" style="left:296px;top:9px;color:#fff">ecipкі - Windows Mov...</span>
 <span class="t" style="left:654px;top:9px;color:#fff">RU</span>
 <div class="a" style="left:689px;top:0;width:111px;height:30px;background:linear-gradient(#1890E8 0,#14A0F0 2px,#1496EA 12px,#1280D8 28px,#1070C8 30px);border-left:1px solid #1A5ABF"></div>
 <div class="a" style="left:681px;top:6px;width:17px;height:17px;border-radius:50%;background:radial-gradient(circle at 40% 35%,#B8D8FF,#4A90F0 60%,#2A6AD0);border:1px solid #fff"><svg class="a" style="left:4px;top:3px" width="8" height="10"><path d="M6 1L2 5L6 9" fill="none" stroke="#fff" stroke-width="2"/></svg></div>
 <svg class="a" style="left:700px;top:6px" width="16" height="17" viewBox="0 0 16 17"><rect x="6" y="1" width="9" height="8" fill="#5A70B8" stroke="#2A3A6A" stroke-width="0.8"/><rect x="1" y="6" width="9" height="8" fill="#6A80C8" stroke="#2A3A6A" stroke-width="0.8"/><path d="M3 15H8M10 10H14" stroke="#AAB" stroke-width="1.5"/></svg>
 <svg class="a" style="left:718px;top:6px" width="16" height="17" viewBox="0 0 16 17"><path d="M1 1H5V7L10 1H15L9 8L15 16H10L5 10V16H1Z" fill="#E81010"/><path d="M9 10L15 16H10Z" fill="#111"/></svg>
 <svg class="a" style="left:737px;top:5px" width="16" height="18" viewBox="0 0 16 18"><rect x="1" y="1" width="14" height="15" fill="#1A1A9A" stroke="#AAB" stroke-width="1"/><rect x="3" y="3" width="10" height="10" fill="#2A3ACA"/><circle cx="6" cy="6" r="0.8" fill="#EEE"/><circle cx="9" cy="8" r="0.8" fill="#EEE"/><circle cx="7" cy="10" r="0.8" fill="#EEE"/></svg>
 <span class="t" style="left:761px;top:9px;color:#fff">6:00</span>
</div>

<!-- WATERMARK -->
<div class="a" style="left:0;top:0;width:800px;height:600px;overflow:hidden;pointer-events:none">
<svg class="a" style="left:0;top:0" width="800" height="600">
<g transform="translate(227 25)"><g transform="rotate(-17)"><rect x="-46" y="-36" width="92" height="72" rx="12" fill="none" stroke="rgba(190,210,235,0.45)" stroke-width="6"/></g>
 <circle cx="20" cy="0" r="24" fill="none" stroke="rgba(225,215,130,0.45)" stroke-width="3"/>
 <path d="M2 -16A24 24 0 0 1 40 -8" fill="none" stroke="rgba(225,215,130,0.35)" stroke-width="2"/>
 <path d="M-5 18A24 24 0 0 0 35 20" fill="none" stroke="rgba(235,170,170,0.35)" stroke-width="3"/>
 <path d="M-48 -6C-30 -8 -15 -4 0 2C5 -6 10 -12 24 -12L30 -10L22 -8C14 -4 12 4 12 14C10 22 4 26 -2 28C2 20 2 10 -2 6C-18 4 -34 0 -48 -6Z" fill="rgba(230,200,190,0.35)"/>
 <path d="M-20 -30C-12 -24 -6 -14 0 -2L8 -8C2 -18 -10 -26 -20 -30Z" fill="rgba(225,215,150,0.35)"/></g>
<g transform="translate(227 193)"><g transform="rotate(-17)"><rect x="-46" y="-36" width="92" height="72" rx="12" fill="none" stroke="rgba(190,210,235,0.45)" stroke-width="6"/></g>
 <circle cx="20" cy="0" r="24" fill="none" stroke="rgba(225,215,130,0.45)" stroke-width="3"/>
 <path d="M2 -16A24 24 0 0 1 40 -8" fill="none" stroke="rgba(225,215,130,0.35)" stroke-width="2"/>
 <path d="M-5 18A24 24 0 0 0 35 20" fill="none" stroke="rgba(235,170,170,0.35)" stroke-width="3"/>
 <path d="M-48 -6C-30 -8 -15 -4 0 2C5 -6 10 -12 24 -12L30 -10L22 -8C14 -4 12 4 12 14C10 22 4 26 -2 28C2 20 2 10 -2 6C-18 4 -34 0 -48 -6Z" fill="rgba(230,200,190,0.35)"/>
 <path d="M-20 -30C-12 -24 -6 -14 0 -2L8 -8C2 -18 -10 -26 -20 -30Z" fill="rgba(225,215,150,0.35)"/></g>
<g transform="translate(227 353)"><g transform="rotate(-17)"><rect x="-46" y="-36" width="92" height="72" rx="12" fill="none" stroke="rgba(190,210,235,0.45)" stroke-width="6"/></g>
 <circle cx="20" cy="0" r="24" fill="none" stroke="rgba(225,215,130,0.45)" stroke-width="3"/>
 <path d="M2 -16A24 24 0 0 1 40 -8" fill="none" stroke="rgba(225,215,130,0.35)" stroke-width="2"/>
 <path d="M-5 18A24 24 0 0 0 35 20" fill="none" stroke="rgba(235,170,170,0.35)" stroke-width="3"/>
 <path d="M-48 -6C-30 -8 -15 -4 0 2C5 -6 10 -12 24 -12L30 -10L22 -8C14 -4 12 4 12 14C10 22 4 26 -2 28C2 20 2 10 -2 6C-18 4 -34 0 -48 -6Z" fill="rgba(230,200,190,0.35)"/>
 <path d="M-20 -30C-12 -24 -6 -14 0 -2L8 -8C2 -18 -10 -26 -20 -30Z" fill="rgba(225,215,150,0.35)"/></g>
<g transform="translate(227 530)"><g transform="rotate(-17)"><rect x="-46" y="-36" width="92" height="72" rx="12" fill="none" stroke="rgba(190,210,235,0.45)" stroke-width="6"/></g>
 <circle cx="20" cy="0" r="24" fill="none" stroke="rgba(225,215,130,0.45)" stroke-width="3"/>
 <path d="M2 -16A24 24 0 0 1 40 -8" fill="none" stroke="rgba(225,215,130,0.35)" stroke-width="2"/>
 <path d="M-5 18A24 24 0 0 0 35 20" fill="none" stroke="rgba(235,170,170,0.35)" stroke-width="3"/>
 <path d="M-48 -6C-30 -8 -15 -4 0 2C5 -6 10 -12 24 -12L30 -10L22 -8C14 -4 12 4 12 14C10 22 4 26 -2 28C2 20 2 10 -2 6C-18 4 -34 0 -48 -6Z" fill="rgba(230,200,190,0.35)"/>
 <path d="M-20 -30C-12 -24 -6 -14 0 -2L8 -8C2 -18 -10 -26 -20 -30Z" fill="rgba(225,215,150,0.35)"/></g>
</svg>
 <div class="wmt" style="left:289px;top:-28px">Stud.kz</div>
 <div class="wmt" style="left:449px;top:-78px">-</div>
 <div class="wmt" style="left:481px;top:-96px">Stud.kz</div>
 <div class="wmt" style="left:298px;top:137px">Stud.kz</div>
 <div class="wmt" style="left:455px;top:86px">-</div>
 <div class="wmt" style="left:484px;top:72px">Stud.kz</div>
 <div class="wmt" style="left:293px;top:308px">Stud.kz</div>
 <div class="wmt" style="left:453px;top:258px">-</div>
 <div class="wmt" style="left:483px;top:235px">Stud.kz</div>
 <div class="wmt" style="left:296px;top:476px">Stud.kz</div>
 <div class="wmt" style="left:456px;top:426px">-</div>
 <div class="wmt" style="left:486px;top:406px">Stud.kz</div>
 <div class="wmt" style="left:296px;top:625px">Stud.kz</div>
 <div class="wmt" style="left:456px;top:575px">-</div>
 <div class="wmt" style="left:489px;top:568px">Stud.kz</div>
</div>
</body></html>
